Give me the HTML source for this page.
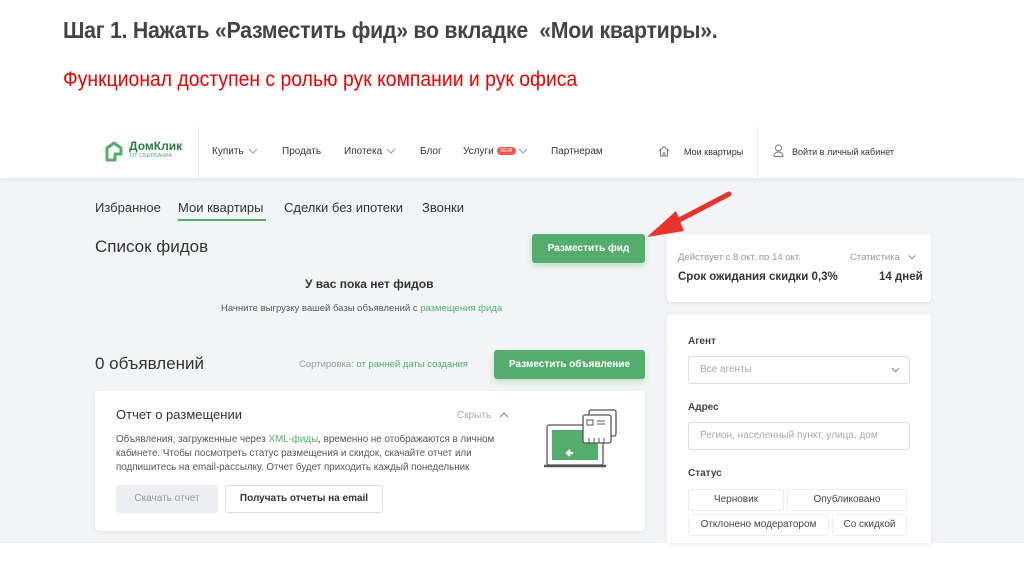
<!DOCTYPE html>
<html><head><meta charset="utf-8"><style>
*{margin:0;padding:0;box-sizing:border-box}
body{width:1024px;height:574px;background:#fff;position:relative;overflow:hidden;font-family:"Liberation Sans","DejaVu Sans",sans-serif}
.a{position:absolute;white-space:nowrap}
.sx{display:inline-block;transform-origin:left top}
.card{position:absolute;background:#fff;border-radius:4px;box-shadow:0 1px 4px rgba(0,0,0,.08)}
.btn{position:absolute;background:#54ad6d;color:#fff;border-radius:3px;font-size:10px;font-weight:bold;text-align:center;box-shadow:0 3px 6px rgba(84,173,109,.3)}
.g{color:#54ad6d}
.nav{font-size:10px;color:#333;top:146px;line-height:12px}
.chev{display:inline-block;width:10px;height:6px;vertical-align:middle;margin-left:4px}
.chip{position:absolute;border:1px solid #eceef0;border-radius:3px;font-size:10px;color:#444;text-align:center;height:22px;line-height:20px}
</style></head><body>
<div class="a" style="left:63px;top:17px;font-size:23px;font-weight:bold;color:#444;letter-spacing:-0.3px"><span class="sx" style="transform:scaleX(.927)">Шаг 1. Нажать «Разместить фид» во вкладке&nbsp; «Мои квартиры».</span></div>
<div class="a" style="left:63px;top:68px;font-size:21px;color:#e00"><span class="sx" style="transform:scaleX(.923)">Функционал доступен с ролью рук компании и рук офиса</span></div>

<!-- header -->
<div style="position:absolute;left:0;top:127px;width:1024px;height:51px;background:#fff;box-shadow:0 2px 4px rgba(0,0,0,.06);z-index:2">
 <svg style="position:absolute;left:104px;top:13px" width="20" height="22" viewBox="0 0 20 22"><path d="M3 20V8l7-5 7 5v6h-6v6z" fill="none" stroke="#54ad6d" stroke-width="3" stroke-linejoin="round"/></svg>
 <div class="a" style="left:129px;top:12px;font-size:12px;font-weight:bold;color:#2d7a4a">ДомКлик</div>
 <div class="a" style="left:130px;top:26px;font-size:5.5px;color:#54ad6d">ОТ СБЕРБАНКА</div>
 <div style="position:absolute;left:198px;top:0;width:1px;height:51px;background:#eee"></div>
 <div style="position:absolute;left:757px;top:0;width:1px;height:51px;background:#eee"></div>
</div>
<div style="position:absolute;z-index:3;left:0;top:0">
<div class="a nav" style="left:212px">Купить<svg class="chev" viewBox="0 0 10 6"><path d="M1 1l4 4 4-4" fill="none" stroke="#999"/></svg></div>
<div class="a nav" style="left:282px">Продать</div>
<div class="a nav" style="left:344px">Ипотека<svg class="chev" viewBox="0 0 10 6"><path d="M1 1l4 4 4-4" fill="none" stroke="#999"/></svg></div>
<div class="a nav" style="left:420px">Блог</div>
<div class="a nav" style="left:463px">Услуги <span style="display:inline-block;background:#f0584f;color:#fff;font-size:5px;line-height:8px;border-radius:5px;padding:0 4px;vertical-align:middle">NEW</span><svg class="chev" style="margin-left:2px" viewBox="0 0 10 6"><path d="M1 1l4 4 4-4" fill="none" stroke="#999"/></svg></div>
<div class="a nav" style="left:551px">Партнерам</div>
<svg class="a" style="left:658px;top:145px" width="12" height="12" viewBox="0 0 12 12"><path d="M1 6L6 1.5 11 6M2.5 5v6h7V5M5 11V8h2v3" fill="none" stroke="#777" stroke-width="1"/></svg>
<div class="a nav" style="left:684px;font-size:9px;top:146px">Мои квартиры</div>
<svg class="a" style="left:773px;top:144px" width="11" height="13" viewBox="0 0 11 13"><circle cx="5.5" cy="4" r="3" fill="none" stroke="#777"/><path d="M1 12.5c0-3 2-4.5 4.5-4.5S10 9.5 10 12.5z" fill="none" stroke="#777"/></svg>
<div class="a nav" style="left:792px;font-size:9px;top:146px">Войти в личный кабинет</div>
</div>

<!-- gray area -->
<div style="position:absolute;left:0;top:178px;width:1024px;height:365px;background:#f2f4f6"></div>

<div class="a" style="left:95px;top:200px;font-size:13px;color:#333">Избранное</div>
<div class="a" style="left:178px;top:200px;font-size:13px;color:#333">Мои квартиры</div>
<div style="position:absolute;left:178px;top:219px;width:88px;height:2px;background:#54ad6d"></div>
<div class="a" style="left:284px;top:200px;font-size:13px;color:#333">Сделки без ипотеки</div>
<div class="a" style="left:422px;top:200px;font-size:13px;color:#333">Звонки</div>

<div class="a" style="left:95px;top:237px;font-size:17px;color:#333">Список фидов</div>
<div class="btn" style="left:532px;top:234px;width:113px;height:29px;line-height:29px">Разместить фид</div>
<div class="a" style="left:305px;top:277px;font-size:12px;font-weight:bold;color:#333">У вас пока нет фидов</div>
<div class="a" style="left:221px;top:303px;font-size:9.5px;color:#555">Начните выгрузку вашей базы объявлений с <span class="g">размещения фида</span></div>

<div class="a" style="left:95px;top:354px;font-size:17px;color:#333">0 объявлений</div>
<div class="a" style="left:299px;top:359px;font-size:9.5px;color:#999">Сортировка: <span class="g">от ранней даты создания</span></div>
<div class="btn" style="left:494px;top:350px;width:151px;height:29px;line-height:29px">Разместить объявление</div>

<div class="card" style="left:95px;top:391px;width:550px;height:140px"></div>
<div class="a" style="left:116px;top:407px;font-size:13px;color:#333">Отчет о размещении</div>
<div class="a" style="left:457px;top:410px;font-size:10px;color:#aaa">Скрыть<svg class="chev" viewBox="0 0 10 6" style="margin-left:8px"><path d="M1 5l4-4 4 4" fill="none" stroke="#777"/></svg></div>
<div class="a" style="left:116px;top:433px;font-size:9.8px;color:#555;line-height:14px">Объявления, загруженные через <span class="g">XML-фиды</span>, временно не отображаются в личном<br>кабинете. Чтобы посмотреть статус размещения и скидок, скачайте отчет или<br>подпишитесь на email-рассылку. Отчет будет приходить каждый понедельник</div>
<div style="position:absolute;left:116px;top:485px;width:102px;height:28px;background:#eceef1;border-radius:3px;font-size:10px;color:#999;text-align:center;line-height:28px">Скачать отчет</div>
<div style="position:absolute;left:225px;top:485px;width:158px;height:28px;background:#fff;border:1px solid #ddd;border-radius:3px;font-size:10px;color:#333;font-weight:bold;text-align:center;line-height:26px">Получать отчеты на email</div>
<svg class="a" style="left:542px;top:408px" width="80" height="62" viewBox="0 0 80 62">
<rect x="5" y="17" width="56" height="40" rx="2" fill="#fff" stroke="#555" stroke-width="1.3"/>
<rect x="10" y="22" width="46" height="30" fill="#54ad6d"/>
<path d="M2 58h62" stroke="#555" stroke-width="2.5"/>
<rect x="47" y="2" width="27" height="26" rx="2" fill="#fff" stroke="#555" stroke-width="1.3"/>
<rect x="41" y="7" width="28" height="28" rx="2" fill="#fff" stroke="#555" stroke-width="1.3"/>
<rect x="45" y="12" width="6" height="5" fill="none" stroke="#555"/><path d="M55 13h8M55 16h8M47 30v5M52 30v5M57 30v5M62 30v5" stroke="#555"/>
<path d="M28 42l-3 3 3 3M25 45h6" stroke="#fff" stroke-width="2.2" fill="none"/>
</svg>

<!-- right -->
<div class="card" style="left:667px;top:234px;width:264px;height:68px"></div>
<div class="a" style="left:678px;top:252px;font-size:9.5px;color:#999">Действует с 8 окт. по 14 окт.</div>
<div class="a" style="left:850px;top:252px;font-size:9.5px;color:#999">Статистика<svg class="chev" viewBox="0 0 10 6" style="margin-left:8px;width:8px"><path d="M1 1l4 4 4-4" fill="none" stroke="#666"/></svg></div>
<div class="a" style="left:678px;top:271px;font-size:11.5px;font-weight:bold;color:#333">Срок ожидания скидки 0,3%</div>
<div class="a" style="left:879px;top:271px;font-size:11.5px;font-weight:bold;color:#333">14 дней</div>

<div class="card" style="left:667px;top:314px;width:264px;height:229px;border-radius:4px 4px 0 0"></div>
<div class="a" style="left:688px;top:336px;font-size:10px;font-weight:bold;color:#444">Агент</div>
<div style="position:absolute;left:688px;top:356px;width:222px;height:28px;border:1px solid #ddd;border-radius:3px"></div>
<div class="a" style="left:700px;top:364px;font-size:10px;color:#aaa">Все агенты</div>
<svg class="a" style="left:891px;top:367px" width="9" height="6" viewBox="0 0 10 6"><path d="M1 1l4 4 4-4" fill="none" stroke="#666"/></svg>
<div class="a" style="left:688px;top:402px;font-size:10px;font-weight:bold;color:#444">Адрес</div>
<div style="position:absolute;left:688px;top:422px;width:222px;height:28px;border:1px solid #ddd;border-radius:3px"></div>
<div class="a" style="left:700px;top:430px;font-size:10px;color:#aaa">Регион, населенный пункт, улица, дом</div>
<div class="a" style="left:688px;top:468px;font-size:10px;font-weight:bold;color:#444">Статус</div>
<div class="chip" style="left:688px;top:489px;width:96px">Черновик</div>
<div class="chip" style="left:787px;top:489px;width:120px">Опубликовано</div>
<div class="chip" style="left:688px;top:514px;width:141px">Отклонено модератором</div>
<div class="chip" style="left:832px;top:514px;width:75px">Со скидкой</div>

<!-- arrow -->
<svg class="a" style="left:640px;top:185px;z-index:5" width="100" height="60" viewBox="0 0 100 60"><path d="M89 9L24 43" stroke="#e8322b" stroke-width="5" stroke-linecap="round"/><path d="M7 52L36 26 44 46z" fill="#e8322b"/></svg>
</body></html>
